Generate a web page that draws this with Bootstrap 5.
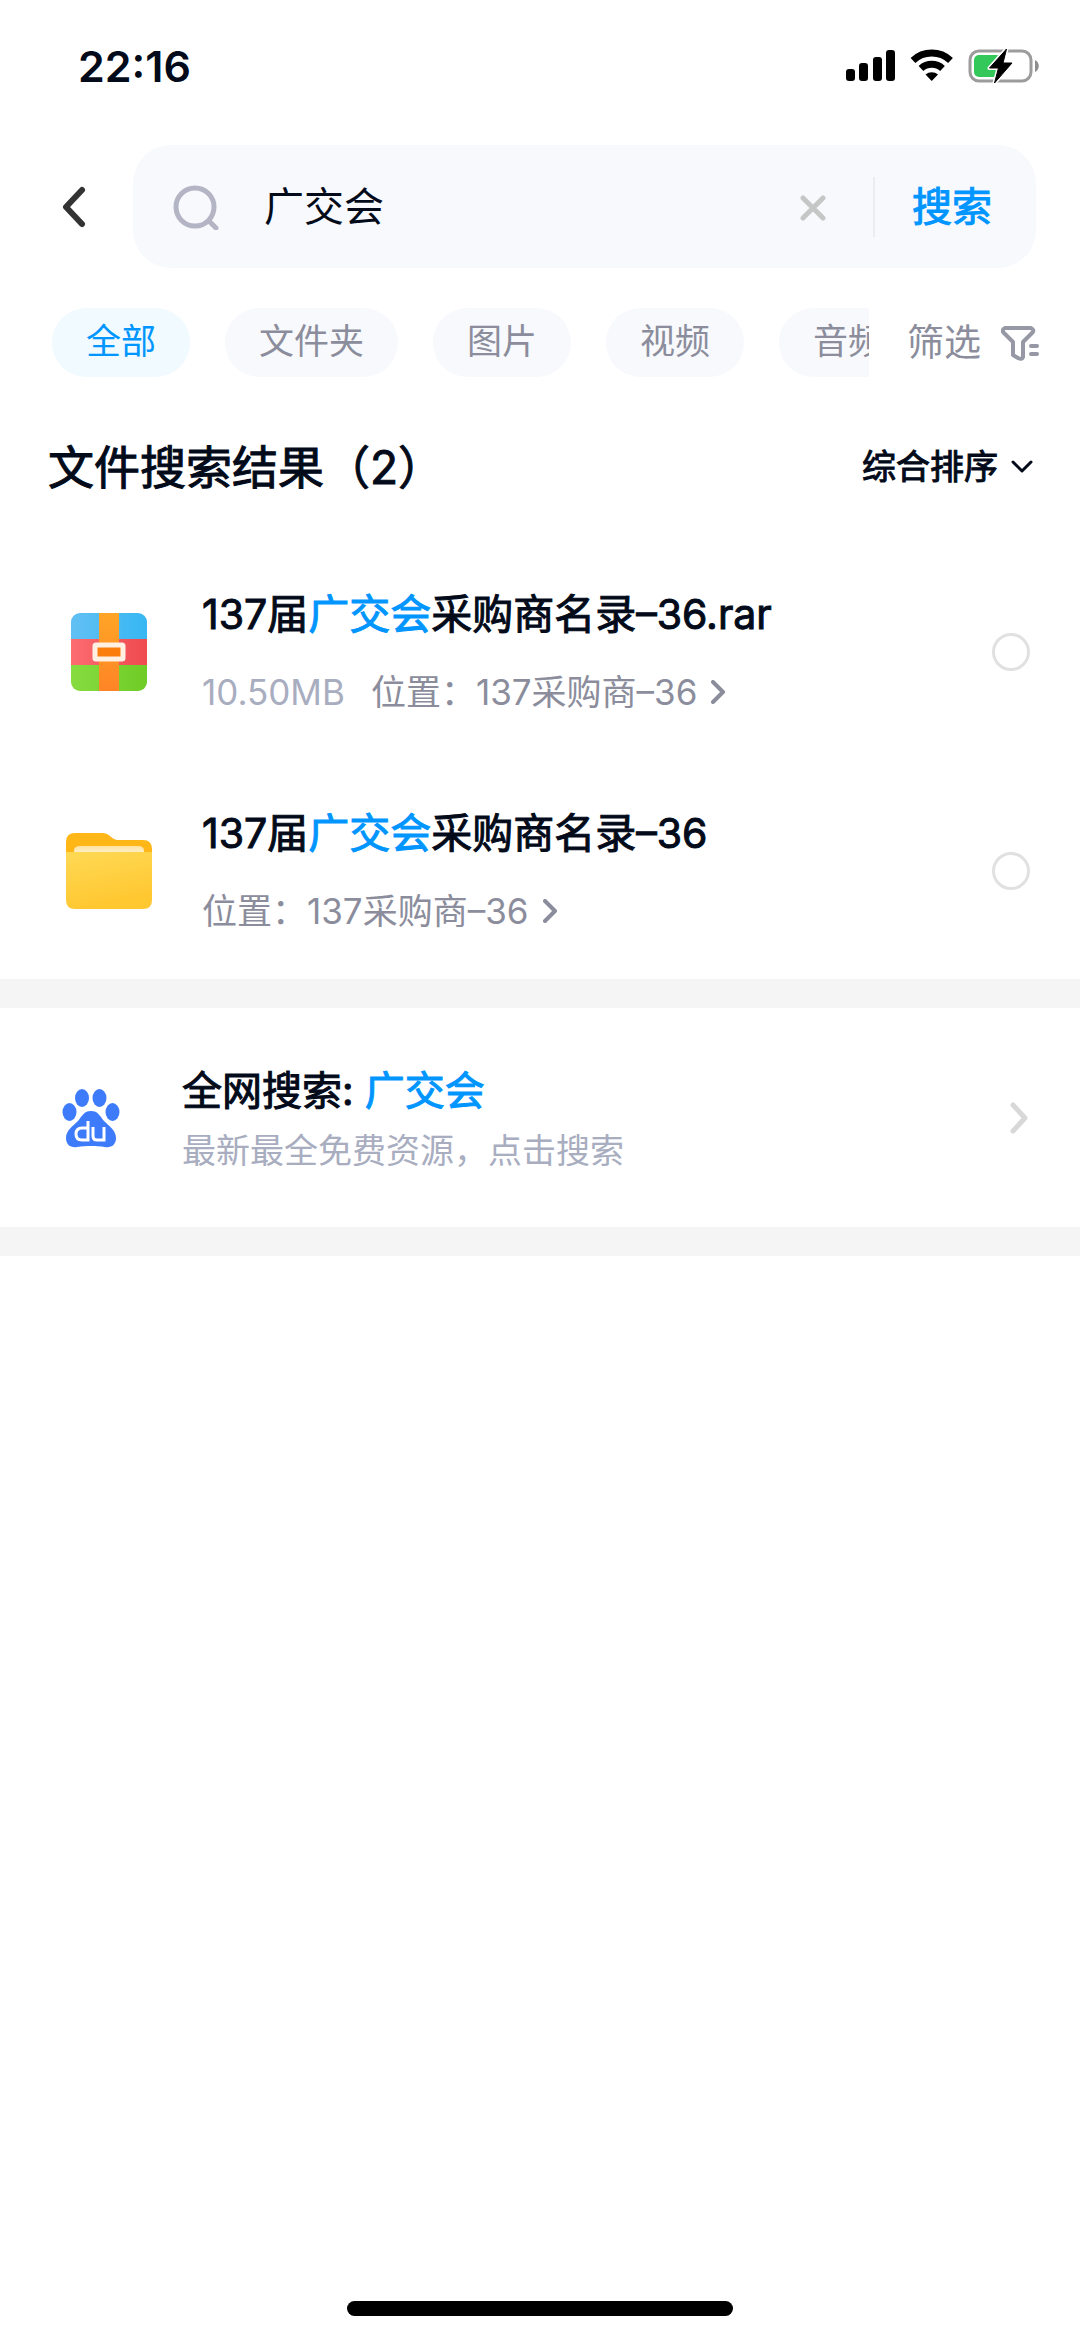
<!DOCTYPE html>
<html lang="zh-CN">
<head>
<meta charset="utf-8">
<meta name="viewport" content="width=device-width, initial-scale=1">
<title>文件搜索</title>
<link rel="stylesheet" href="https://cdn.jsdelivr.net/npm/bootstrap@5.3.0/dist/css/bootstrap.min.css">
<style>
  :root { --ink: #030b1a; --brand: #0095ff; --muted: #8b8d9c; --faint: #a8adbf; --field: #f7f9fd; }
  body { font-family: Inter, "Noto Sans CJK SC", sans-serif; font-size: 40px; line-height: 52px; color: var(--ink); background: #fff; }
  svg { display: block; flex: none; }
  button, select, input { color: inherit; }
  .bare { border: 0; background: none; padding: 0; }
  .brand-text { color: var(--brand); }
  .half-bold { -webkit-text-stroke: 1px currentColor; }
  .status-bar { height: 133px; padding: 0 41px 2px 78px; }
  .clock { font-size: 43px; font-weight: 600; }
  .search-row { padding: 12px 44px 0 62px; gap: 47px; }
  .search-box { height: 123px; min-width: 0; border-radius: 38px; background: var(--field); padding: 0 44px 0 40px; }
  .search-box input { font-size: 40px; width: 0; margin-left: 44px; outline: 0; }
  .split-line { width: 2px; height: 60px; background: #ebedf2; margin: 0 37px 0 46px; flex: none; }
  .filter-row { padding: 40px 41px 0 52px; }
  .chip-strip { gap: 35px; min-width: 0; }
  .chip { height: 69px; border: 0; border-radius: 35px; padding: 0 34px 3px; font-size: 35px; line-height: 48px; white-space: nowrap; color: var(--muted); background: #f8f9fd; flex: none; }
  .chip.active { color: var(--brand); background: #f0faff; }
  .filter-btn { font-size: 37px; color: var(--muted); margin-left: 38px; gap: 20px; }
  .result-head { padding: 58px 46px 0 48px; }
  .result-head h1 { font-size: 46px; line-height: 64px; }
  .sort-box { font-size: 34px; gap: 12px; }
  .sort-box select { appearance: none; outline: 0; }
  .file-row { height: 219px; padding: 2px 50px 0 64px; }
  .file-list { padding-top: 42px; }
  .file-icon { width: 90px; margin-right: 48px; }
  .file-name { font-size: 41px; line-height: 52px; margin-bottom: 28px; }
  .file-meta { font-size: 35px; line-height: 48px; color: var(--muted); gap: 26px; }
  .file-meta a { color: inherit; gap: 14px; }
  .file-size { color: var(--faint); }
  .pick { width: 38px; height: 38px; margin: 0; border: 3px solid #e1e1e1; }
  .band { height: 29px; background: #f5f5f5; }
  .web-row { height: 219px; padding: 0 52px 0 62px; color: inherit; }
  .web-text { margin-left: 62px; padding-top: 6px; }
  .web-title { font-size: 40px; line-height: 60px; }
  .web-sub { font-size: 34px; line-height: 60px; color: var(--faint); }
  .home-bar { width: 386px; height: 15px; border-radius: 8px; background: #000; margin-bottom: 23px; }
</style>
</head>
<body>
<div class="d-flex flex-column min-vh-100">
  <header>
    <div class="status-bar d-flex align-items-center justify-content-between">
      <span class="clock">22:16</span>
      <svg width="193" height="34" viewBox="0 0 193 34" aria-hidden="true">
        <rect x="0" y="20" width="9" height="12" rx="3"/><rect x="13" y="14" width="9" height="18" rx="3"/>
        <rect x="27" y="8" width="9" height="24" rx="3"/><rect x="40" y="1" width="9" height="31" rx="3"/>
        <g fill="none" stroke="#000" stroke-width="7"><path d="M67 11.500a27.500 27.500 0 0 1 37.500 0"/><path d="M75 19.500a16 16 0 0 1 21.500 0"/></g>
        <path d="M79.500 25.500a9.500 9.500 0 0 1 12.500 0L85.700 32z"/>
        <rect x="124" y="2" width="61" height="30" rx="9" fill="none" stroke="#9c9c9c" stroke-width="3"/>
        <path d="M189 11c5 2 5 10 0 12z" fill="#8e8e8e"/>
        <rect x="128" y="6" width="27" height="22" rx="5" fill="#34c759"/>
        <path d="M160.500 0 143.500 19h9L148.500 34 166 14h-9z" stroke="#fff" stroke-width="4" stroke-linejoin="round"/>
        <path d="M160.500 0 143.500 19h9L148.500 34 166 14h-9z" stroke="#000" stroke-width="1" stroke-linejoin="round"/>
      </svg>
    </div>
    <form class="search-row d-flex align-items-center" onsubmit="return false">
      <button type="button" class="bare" aria-label="返回">
        <svg width="24" height="42" viewBox="0 0 24 42" fill="none" stroke="#333" stroke-width="6" stroke-linecap="round" stroke-linejoin="round"><path d="M20 4 4 21 20 38"/></svg>
      </button>
      <div class="search-box d-flex align-items-center flex-grow-1">
        <svg width="47" height="46" viewBox="0 0 47 46" fill="none" stroke="#b3b5c4" stroke-width="5" stroke-linecap="round"><circle cx="22" cy="23" r="19"/><path d="m37 38 6 6"/></svg>
        <input class="bare flex-grow-1" type="text" value="广交会" aria-label="搜索文件">
        <button type="button" class="bare" aria-label="清除">
          <svg width="28" height="28" viewBox="0 0 28 28" fill="none" stroke="#c6c6c6" stroke-width="5" stroke-linecap="round"><path d="m4 5 20 20M24 5 4 25"/></svg>
        </button>
        <span class="split-line"></span>
        <button type="submit" class="bare brand-text half-bold text-nowrap">搜索</button>
      </div>
    </form>
    <div class="filter-row d-flex align-items-center">
      <div class="chip-strip d-flex flex-grow-1 overflow-hidden">
        <button type="button" class="chip active">全部</button>
        <button type="button" class="chip">文件夹</button>
        <button type="button" class="chip">图片</button>
        <button type="button" class="chip">视频</button>
        <button type="button" class="chip">音频</button>
      </div>
      <button type="button" class="filter-btn bare d-flex align-items-center flex-shrink-0">筛选
        <svg width="38" height="36" viewBox="0 0 38 36" fill="none" stroke="#9698a6" stroke-width="4" stroke-linecap="round" stroke-linejoin="round"><path d="M4 3h26q4 2 1 5L22 17v15q-1 3-5 1l-5-3V17L3 8q-3-3 1-5z"/><path d="M30 21h6M30 29h6"/></svg>
      </button>
    </div>
  </header>

  <main class="flex-grow-1">
    <div class="result-head d-flex align-items-center justify-content-between">
      <h1 class="half-bold fw-normal m-0">文件搜索结果（2）</h1>
      <label class="sort-box d-flex align-items-center">
        <select class="bare half-bold" aria-label="排序方式"><option>综合排序</option></select>
        <svg width="24" height="16" viewBox="0 0 24 16" fill="none" stroke="#030b1a" stroke-width="3" stroke-linecap="round" stroke-linejoin="round"><path d="m3 3 9 9 9-9"/></svg>
      </label>
    </div>

    <ul class="file-list list-unstyled m-0">
      <li class="file-row d-flex align-items-center">
        <div class="file-icon d-flex justify-content-center">
          <svg width="76" height="78" viewBox="0 0 76 78" aria-hidden="true">
            <defs>
              <clipPath id="rarClip"><rect width="76" height="78" rx="9"/></clipPath>
              <linearGradient id="rarBlue"><stop stop-color="#62c0f3"/><stop offset="1" stop-color="#36b7f3"/></linearGradient>
              <linearGradient id="rarRed"><stop stop-color="#fb6c70"/><stop offset="1" stop-color="#ef4a4f"/></linearGradient>
              <linearGradient id="rarGreen"><stop stop-color="#86dc40"/><stop offset="1" stop-color="#6fcb26"/></linearGradient>
              <linearGradient id="rarBelt" x2="0" y2="1"><stop stop-color="#ffa526"/><stop offset="1" stop-color="#ff8426"/></linearGradient>
            </defs>
            <g clip-path="url(#rarClip)">
              <rect width="76" height="26" fill="url(#rarBlue)"/><rect y="26" width="76" height="26" fill="url(#rarRed)"/><rect y="52" width="76" height="26" fill="url(#rarGreen)"/>
              <rect x="28" width="20" height="78" fill="url(#rarBelt)"/>
            </g>
            <rect x="24" y="32" width="28" height="14" rx="1" fill="#fb7d0c" stroke="#fff0e2" stroke-width="5"/>
          </svg>
        </div>
        <div class="flex-grow-1">
          <div class="file-name half-bold">137届<span class="brand-text">广交会</span>采购商名录–36.rar</div>
          <div class="file-meta d-flex align-items-center">
            <span class="file-size">10.50MB</span>
            <a href="#" class="d-flex align-items-center text-decoration-none">位置：137采购商–36
              <svg width="14" height="24" viewBox="0 0 14 24" fill="none" stroke="#8b8d9c" stroke-width="4" stroke-linecap="round" stroke-linejoin="round"><path d="m2 2 10 10L2 22"/></svg></a>
          </div>
        </div>
        <input class="pick form-check-input rounded-circle shadow-none" type="checkbox" aria-label="选择 137届广交会采购商名录–36.rar">
      </li>
      <li class="file-row d-flex align-items-center">
        <div class="file-icon d-flex justify-content-center">
          <svg width="88" height="78" viewBox="0 0 88 78" aria-hidden="true">
            <defs>
              <linearGradient id="dirFront" x2=".3" y2="1"><stop stop-color="#ffd955"/><stop offset="1" stop-color="#ffc730"/></linearGradient>
              <linearGradient id="dirPaper" x2="0" y2="1"><stop stop-color="#ffe3a0"/><stop offset="1" stop-color="#fff3dc"/></linearGradient>
            </defs>
            <path d="M1 30V10Q1 1 10 1h28q4 0 7 3 4 4 8 4h25q9 0 9 9v13z" fill="#ffb718"/>
            <path d="M9 24v-5q0-5 6-5h58q6 0 6 5v5z" fill="url(#dirPaper)"/>
            <path d="M1 20h86v48q0 9-9 9H10q-9 0-9-9z" fill="url(#dirFront)"/>
          </svg>
        </div>
        <div class="flex-grow-1">
          <div class="file-name half-bold">137届<span class="brand-text">广交会</span>采购商名录–36</div>
          <div class="file-meta d-flex align-items-center">
            <a href="#" class="d-flex align-items-center text-decoration-none">位置：137采购商–36
              <svg width="14" height="24" viewBox="0 0 14 24" fill="none" stroke="#8b8d9c" stroke-width="4" stroke-linecap="round" stroke-linejoin="round"><path d="m2 2 10 10L2 22"/></svg></a>
          </div>
        </div>
        <input class="pick form-check-input rounded-circle shadow-none" type="checkbox" aria-label="选择 137届广交会采购商名录–36">
      </li>
    </ul>

    <div class="band"></div>
    <a href="#" class="web-row d-flex align-items-center text-decoration-none">
      <svg width="58" height="60" viewBox="0 0 58 60" fill="#3e7bfa" aria-hidden="true">
        <ellipse cx="7.500" cy="24" rx="7" ry="9"/><ellipse cx="20" cy="10" rx="7" ry="9"/><ellipse cx="37.500" cy="10" rx="7" ry="9"/><ellipse cx="50.500" cy="24" rx="7" ry="9"/>
        <path d="M29 23c7 0 9 5 13 10 5 5 12 9 12 17 0 7-5 10-11 9-5-1-9-1-14-1s-9 0-14 1C9 60 4 57 4 50c0-8 7-12 12-17 4-5 6-10 13-10z"/>
        <g fill="none" stroke="#fff" stroke-width="3"><path d="M26 33v19h-6q-6 0-6-6 0-6 6-6h6M31 39v9q0 4 4 4h7V39"/></g>
      </svg>
      <div class="web-text flex-grow-1">
        <div class="web-title half-bold">全网搜索: <span class="brand-text">广交会</span></div>
        <div class="web-sub">最新最全免费资源，点击搜索</div>
      </div>
      <svg width="18" height="32" viewBox="0 0 18 32" fill="none" stroke="#d8d8d8" stroke-width="5" stroke-linecap="round" stroke-linejoin="round"><path d="m3 3 12 13L3 29"/></svg>
    </a>
    <div class="band"></div>
  </main>

  <footer class="d-flex justify-content-center"><div class="home-bar"></div></footer>
</div>
<script src="https://cdn.jsdelivr.net/npm/bootstrap@5.3.0/dist/js/bootstrap.bundle.min.js"></script>
</body>
</html>
